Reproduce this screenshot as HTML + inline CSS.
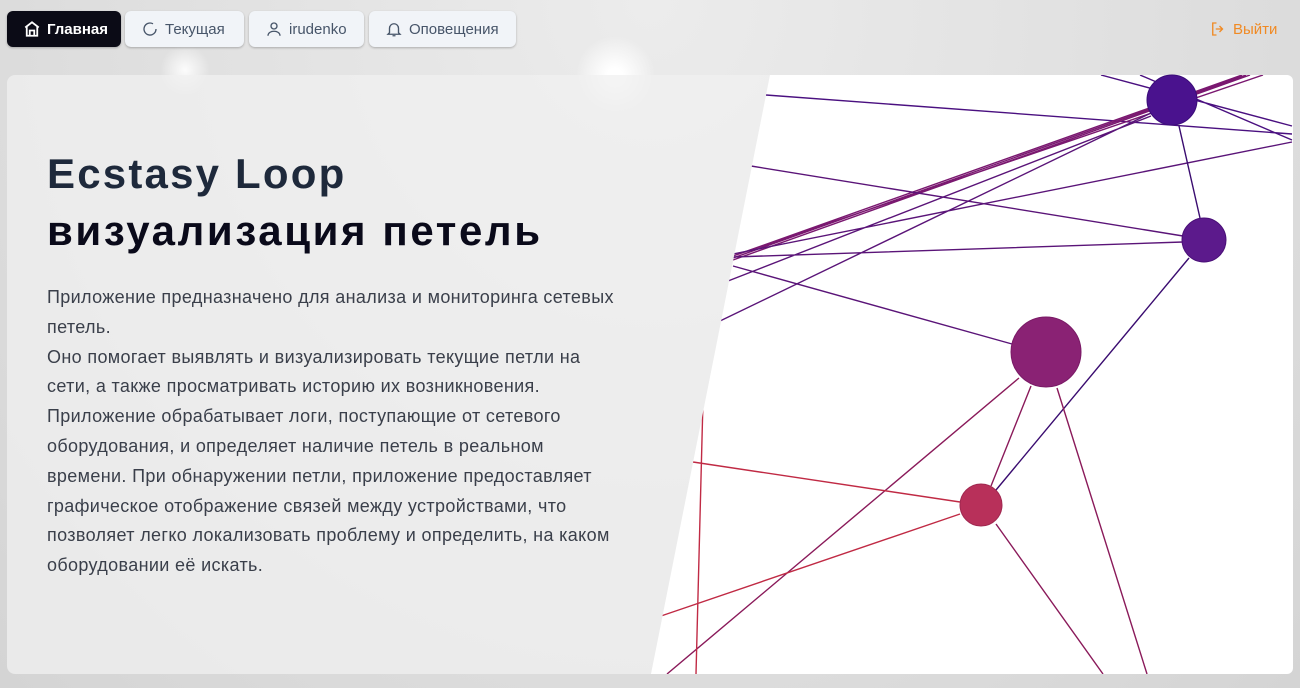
<!DOCTYPE html>
<html><head><meta charset="utf-8"><style>
*{margin:0;padding:0;box-sizing:border-box}
body{width:1300px;height:688px;overflow:hidden;font-family:"Liberation Sans","DejaVu Sans",sans-serif;
background:radial-gradient(circle at 615px 76px,#fff 0,#fff 8px,rgba(255,255,255,0) 40px),
radial-gradient(circle at 185px 70px,rgba(255,255,255,.9) 0,rgba(255,255,255,0) 25px),
radial-gradient(ellipse at 50% 0,#ececec,#dcdcdc 70%,#d4d4d4);position:relative}
.nav{position:absolute;top:11px;height:36px;border-radius:6px;background:#f1f4f8;color:#475569;font-size:15px;display:flex;align-items:center;gap:6px;padding-left:16px;box-shadow:0 1px 2px rgba(0,0,0,.25)}
.nav.dark{background:#0b0b16;color:#fff;font-weight:bold}
.nav svg{flex:none}
.left{position:absolute;left:7px;top:75px;width:800px;height:599px;border-radius:8px;background:rgba(240,240,240,.75)}
h1{position:absolute;left:47px;font-weight:bold;font-size:42px;white-space:nowrap}
p{position:absolute;left:47px;top:283px;font-size:18px;line-height:29.8px;color:#3a3f4a;letter-spacing:.35px;white-space:nowrap}
</style></head><body>
<div class="left"></div>
<div class="nav dark" style="left:7px;width:114px"><svg width="18" height="18" viewBox="0 0 24 24" fill="none" stroke="#fff" stroke-width="2.4"><path d="M3 10l9-7 9 7M5 9v12h14V9M9 21v-7h6v7"/></svg>Главная</div>
<div class="nav" style="left:125px;width:119px"><svg width="18" height="18" viewBox="0 0 24 24" fill="none" stroke="#475569" stroke-width="1.8"><path d="M20 12a8 8 0 1 1-4-6.9"/></svg>Текущая</div>
<div class="nav" style="left:249px;width:115px"><svg width="18" height="18" viewBox="0 0 24 24" fill="none" stroke="#475569" stroke-width="1.8"><circle cx="12" cy="8" r="4"/><path d="M4 21c0-4 4-6 8-6s8 2 8 6"/></svg>irudenko</div>
<div class="nav" style="left:369px;width:147px"><svg width="18" height="18" viewBox="0 0 24 24" fill="none" stroke="#475569" stroke-width="1.8"><path d="M6 17V11a6 6 0 0 1 12 0v6l2 2H4zM10 21h4"/></svg>Оповещения</div>
<div style="position:absolute;left:1209px;top:20px;color:#f08a24;font-size:15px;display:flex;gap:6px;align-items:center"><svg width="18" height="18" viewBox="0 0 24 24" fill="none" stroke="#f08a24" stroke-width="1.8"><path d="M10 4H5v16h5M14 8l4 4-4 4M18 12H9"/></svg>Выйти</div>
<svg style="position:absolute;left:0;top:0" width="1300" height="688">
<defs><clipPath id="c"><path d="M770 75H1287a6 6 0 0 1 6 6V668a6 6 0 0 1-6 6H651z"/></clipPath></defs>
<path d="M770 75H1287a6 6 0 0 1 6 6V668a6 6 0 0 1-6 6H651z" fill="#fff"/>
<g clip-path="url(#c)" fill="none" stroke-width="1.4">
<path stroke="#4a1080" d="M766 95L1292 134M1101 75L1292 126M1140 75L1292 140"/>
<path stroke="#7a1870" d="M733 256L1242 75M733 258L1246 75M733 260L1250 75M733 256L1263 75"/>
<path stroke="#5a1478" d="M728 281L1151 116M720 321L1153 112M733 254L1292 142M751 166L1183 236M733 257L1183 242M733 266L1012 344"/>
<path stroke="#3a0c70" d="M1179 126L1200 218M1189 258L996 490"/>
<path stroke="#8a1a5a" d="M1019 378L667 674M1031 386L991 486M1057 388L1147 674M996 524L1103 674"/>
<path stroke="#c02a44" d="M693 462L960 502M960 514L661 616M703 400L696 674"/>
</g>
<g stroke-width="1">
<circle cx="1172" cy="100" r="25" fill="#4a128e" stroke="#3a0c78"/>
<circle cx="1204" cy="240" r="22" fill="#5c1a8c" stroke="#4a1078"/>
<circle cx="1046" cy="352" r="35" fill="#8a2274" stroke="#7a1a66"/>
<circle cx="981" cy="505" r="21" fill="#b8305a" stroke="#a02850"/>
</g>
</svg>
<h1 style="top:150px;color:#1e293b;letter-spacing:2.2px">Ecstasy Loop</h1>
<h1 style="top:207px;color:#0a0a1a;letter-spacing:2.6px">визуализация петель</h1>
<p>Приложение предназначено для анализа и мониторинга сетевых<br>петель.<br>Оно помогает выявлять и визуализировать текущие петли на<br>сети, а также просматривать историю их возникновения.<br>Приложение обрабатывает логи, поступающие от сетевого<br>оборудования, и определяет наличие петель в реальном<br>времени. При обнаружении петли, приложение предоставляет<br>графическое отображение связей между устройствами, что<br>позволяет легко локализовать проблему и определить, на каком<br>оборудовании её искать.</p>
</body></html>
